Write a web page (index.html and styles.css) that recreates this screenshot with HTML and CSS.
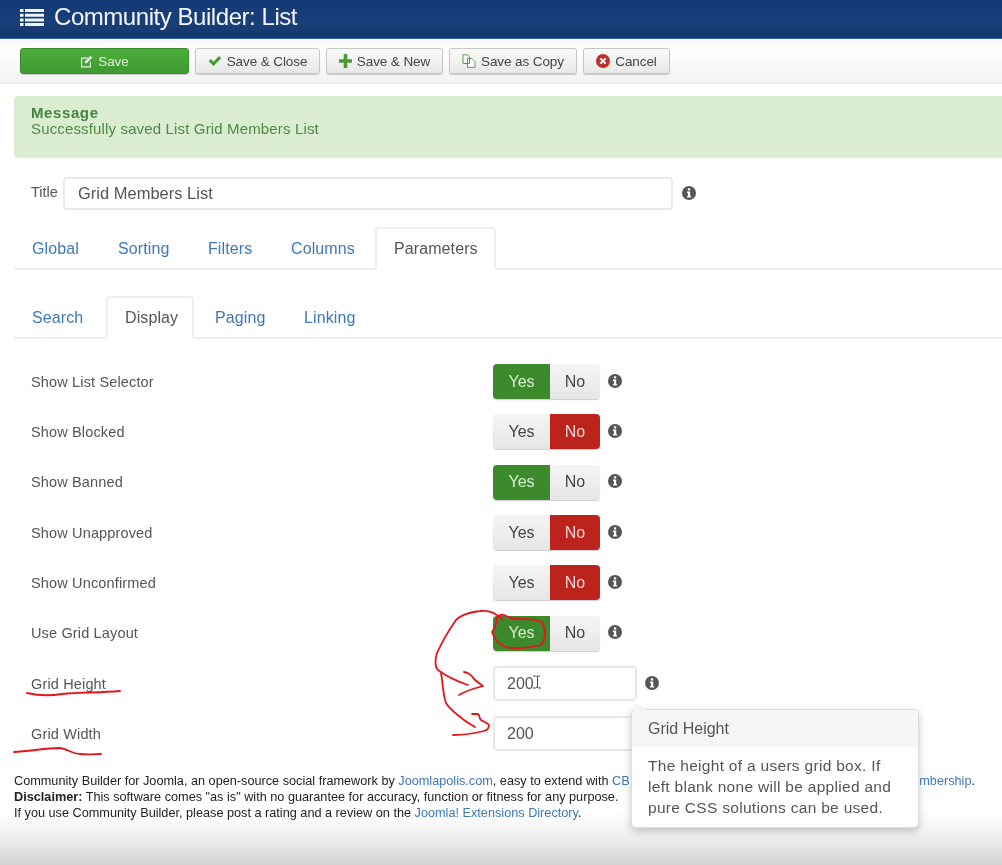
FILE: index.html
```html
<!DOCTYPE html>
<html lang="en">
<head>
<meta charset="utf-8">
<title>Community Builder: List</title>
<link rel="stylesheet" href="styles.css">
</head>
<body>
<svg width="0" height="0" class="defs" aria-hidden="true">
  <symbol id="info" viewBox="0 0 14 14">
    <circle cx="7" cy="7" r="7" fill="#555"/>
    <rect x="5.9" y="2.3" width="2.3" height="2.2" fill="#fff"/>
    <path d="M4.9 5.6h3.3v4.6h1v1.3H4.9v-1.3h1V6.9h-1z" fill="#fff"/>
  </symbol>
</svg>
<div class="page">
  <header class="topbar">
    <svg class="menu-icon" width="24" height="18" viewBox="0 0 24 18"><path d="M0 1h3.5v3H0zM5 1h19v3H5zM0 5.7h3.5v3H0zM5 5.7h19v3H5zM0 10.4h3.5v3H0zM5 10.4h19v3H5zM0 15h3.5v3H0zM5 15h19v3H5z" fill="#f2f4f8"/></svg>
    <h1>Community Builder: List</h1>
  </header>
  <nav class="toolbar">
    <button class="tb tb-save">
      <svg width="13" height="13" viewBox="0 0 13 13"><path d="M1 2.5h7L7 3.7H2.2v7.6h7.6V7.5L11 6.3v6.2H1z" fill="#e8f5e4"/><path d="M4.8 6.5l5.8-5.8 1.8 1.8-5.8 5.8H4.8z" fill="#e8f5e4"/></svg>
      Save
    </button>
    <button class="tb tb-close">
      <svg width="14" height="12" viewBox="0 0 14 12"><path d="M.7 6.3l2.2-2.2 2.6 2.6L11 1l2.2 2.2-7.7 7.9z" fill="#4a9a36"/></svg>
      Save &amp; Close
    </button>
    <button class="tb tb-new">
      <svg width="13" height="14" viewBox="0 0 13 14"><path d="M4.7 0h3.6v5.2H13v3.6H8.3V14H4.7V8.8H0V5.2h4.7z" fill="#4a9a36"/></svg>
      Save &amp; New
    </button>
    <button class="tb tb-copy">
      <svg width="14" height="14" viewBox="0 0 14 14"><path d="M1 .8h4.500L7.500 3v6.500H1zM5.500 4.500H10l3 3v5.800H5.500z" fill="#fff" stroke="#5a9a48" stroke-width="1"/></svg>
      Save as Copy
    </button>
    <button class="tb tb-cancel">
      <svg width="14" height="14" viewBox="0 0 14 14"><circle cx="7" cy="7" r="7" fill="#c0302a"/><path d="M4.4 4.4l5.2 5.2M9.6 4.4l-5.2 5.2" stroke="#fff" stroke-width="2"/></svg>
      Cancel
    </button>
  </nav>
  <section class="message">
    <h2>Message</h2>
    <p>Successfully saved List Grid Members List</p>
  </section>
  <div class="title-row">
    <label class="title-label">Title</label>
    <div class="input title-input">Grid Members List</div>
    <svg class="info" width="14" height="14"><use href="#info"/></svg>
  </div>
  <ul class="tabs tabs-main">
    <li><a>Global</a></li>
    <li><a>Sorting</a></li>
    <li><a>Filters</a></li>
    <li><a>Columns</a></li>
    <li class="active"><a>Parameters</a></li>
  </ul>
  <ul class="tabs tabs-sub">
    <li><a>Search</a></li>
    <li class="active"><a>Display</a></li>
    <li><a>Paging</a></li>
    <li><a>Linking</a></li>
  </ul>
  <div class="rows">
    <div class="row"><span class="row-label">Show List Selector</span><div class="toggle"><span class="yes on">Yes</span><span class="no">No</span></div><svg class="info" width="14" height="14"><use href="#info"/></svg></div>
    <div class="row"><span class="row-label">Show Blocked</span><div class="toggle"><span class="yes">Yes</span><span class="no on">No</span></div><svg class="info" width="14" height="14"><use href="#info"/></svg></div>
    <div class="row"><span class="row-label">Show Banned</span><div class="toggle"><span class="yes on">Yes</span><span class="no">No</span></div><svg class="info" width="14" height="14"><use href="#info"/></svg></div>
    <div class="row"><span class="row-label">Show Unapproved</span><div class="toggle"><span class="yes">Yes</span><span class="no on">No</span></div><svg class="info" width="14" height="14"><use href="#info"/></svg></div>
    <div class="row"><span class="row-label">Show Unconfirmed</span><div class="toggle"><span class="yes">Yes</span><span class="no on">No</span></div><svg class="info" width="14" height="14"><use href="#info"/></svg></div>
    <div class="row"><span class="row-label">Use Grid Layout</span><div class="toggle"><span class="yes on">Yes</span><span class="no">No</span></div><svg class="info" width="14" height="14"><use href="#info"/></svg></div>
    <div class="row"><span class="row-label">Grid Height</span><div class="input num-input">200</div><svg class="info" width="14" height="14"><use href="#info"/></svg></div>
    <div class="row"><span class="row-label">Grid Width</span><div class="input num-input">200</div></div>
  </div>
  <footer class="foot">
    <p class="foot-split"><span>Community Builder for Joomla, an open-source social framework by <a>Joomlapolis.com</a>, easy to extend with <a>CB</a></span><span><a>mbership</a>.</span></p>
    <p><b>Disclaimer:</b> This software comes "as is" with no guarantee for accuracy, function or fitness for any purpose.</p>
    <p>If you use Community Builder, please post a rating and a review on the <a>Joomla! Extensions Directory</a>.</p>
  </footer>

  <aside class="tip">
    <h3>Grid Height</h3>
    <p>The height of a users grid box. If left blank none will be applied and pure CSS solutions can be used.</p>
  </aside>

  <svg class="marks" width="1002" height="865" viewBox="0 0 1002 865" fill="none">
    <g stroke="#e8141c" stroke-width="1.8" stroke-linecap="round" stroke-linejoin="round">
      <path d="M497 617C503 613 505 615 510 618C520 620 535 618 542 622C546 630 546 640 541 645C530 648 512 650 503 646C497 642 494 638 492 632C495 628 497 622 497 617Z"/>
      <path d="M502 619C495 612 488 610 480 611C470 612 462 614 456 620C449 630 442 642 437 653C435 660 434 666 438 670C446 676 456 681 468 685"/>
      <path d="M464 672C470 673 472 676 474 679C477 682 480 684 483 686C475 688 466 691 459 695"/>
      <path d="M441 673C443 684 443 695 446 703C450 710 458 715 464 720C468 723 472 725 475 727"/>
      <path d="M472 714H478C480 716 479 718 481 720C484 722 488 723 489 725C489 728 488 730 484 731C476 733 464 735 453 735"/>
      <path d="M27 693C40 696 50 696 62 694C80 692 100 693 120 691"/>
      <path d="M14 752C30 751 48 748 60 748C68 749 72 754 80 754C88 755 95 754 101 754"/>
    </g>
    <path d="M533 676h2.500l1 1 1-1h2.500M537.500 677v10M533 688h2.500l1.500-1 1.500 1h2.500" stroke="#444" stroke-width="1"/>
  </svg>
</div>
</body>
</html>
```
FILE: styles.css
```css
* { box-sizing: border-box; }
html, body { margin: 0; padding: 0; background: #fff; }
.defs { position: absolute; }
.page {
  position: relative;
  width: 1002px;
  height: 865px;
  overflow: hidden;
  display: flex;
  flex-direction: column;
  background: linear-gradient(#ffffff 812px, #ececec 840px, #d2d2d2);
  color: #555;
  font-family: "Liberation Sans", Arial, sans-serif;
  filter: blur(0.5px);
}
.topbar {
  height: 39px;
  flex: none;
  display: flex;
  align-items: center;
  gap: 10px;
  padding: 0 0 5px 20px;
  background: linear-gradient(#123a76, #1a3f79 60%, #14366c);
  border-bottom: 1px solid #2f62a8;
}
.topbar h1 {
  margin: 0;
  font-size: 24px;
  font-weight: 400;
  letter-spacing: -0.45px;
  color: #f4f6fa;
}
.menu-icon { flex: none; }
.toolbar {
  height: 45px;
  flex: none;
  display: flex;
  gap: 6px;
  align-items: flex-start;
  padding: 9px 0 0 20px;
  background: linear-gradient(#f8f8f8, #ffffff 25%, #f2f2f2);
  border-bottom: 1px solid #eaeaea;
}
.tb {
  height: 26px;
  display: flex;
  align-items: center;
  justify-content: center;
  gap: 5px;
  padding: 0;
  border: 1px solid #c6c6c6;
  border-radius: 3px;
  background: linear-gradient(#fafafa, #e8e8e8);
  box-shadow: 0 1px 1px rgba(0, 0, 0, .18);
  color: #444;
  font-family: inherit;
  font-size: 13.500px;
  letter-spacing: -0.1px;
}
.tb-save { width: 169px; background: linear-gradient(#4cad3c, #3f9a31); border-color: #3a8a2e; color: #dff0da; }
.tb-close { width: 125px; }
.tb-new { width: 117px; }
.tb-copy { width: 128px; }
.tb-cancel { width: 87px; }
.message {
  flex: none;
  height: 62px;
  margin: 12px -10px 0 14px;
  padding: 8px 17px;
  background: #dbedd1;
  border-radius: 4px 0 0 4px;
  color: #4a8a44;
}
.message h2 { margin: 0; font-size: 15px; line-height: 17px; letter-spacing: .6px; font-weight: 700; color: #468441; }
.message p { margin: 0; font-size: 15px; line-height: 16px; letter-spacing: .15px; }
.title-row {
  flex: none;
  display: flex;
  align-items: center;
  margin-top: 19px;
  padding-left: 31px;
}
.title-label { width: 32px; font-size: 14.500px; margin-top: -3px; }
.input {
  display: flex;
  align-items: center;
  background: #fff;
  border: 2px solid #e8e8e8;
  border-radius: 4px;
  color: #555;
}
.title-input { width: 610px; height: 33px; padding-left: 13px; font-size: 16.500px; }
.title-row .info { margin-left: 9px; margin-top: -2px; }
.tabs {
  flex: none;
  display: flex;
  gap: 3px;
  list-style: none;
  margin: 0 0 0 14px;
  padding: 0;
  height: 43px;
  border-bottom: 2px solid #eeeeee;
  font-size: 16px;
  letter-spacing: .1px;
}
.tabs li { height: 43px; }
.tabs a { display: block; height: 43px; padding: 13px 18px 0; color: #3f78b5; }
.tabs .active a {
  background: #fff;
  border: 2px solid #eeeeee;
  border-bottom-color: #fff;
  border-radius: 4px 4px 0 0;
  padding: 11px 17px 0;
  color: #555;
}
.tabs-main { margin-top: 17px; }
.tabs-sub { margin-top: 26px; }
.tabs-main li:nth-child(1) { width: 83px; }
.tabs-main li:nth-child(2) { width: 87px; }
.tabs-main li:nth-child(3) { width: 80px; }
.tabs-main li:nth-child(4) { width: 99px; }
.tabs-main li:nth-child(5) { width: 121px; }
.tabs-sub li:nth-child(1) { width: 89px; }
.tabs-sub li:nth-child(2) { width: 88px; }
.tabs-sub li:nth-child(3) { width: 86px; }
.rows { flex: none; margin-top: 17.400px; padding-left: 31px; }
.row { height: 50.330px; display: flex; align-items: center; }
.row-label { width: 462px; font-size: 14.500px; letter-spacing: .15px; color: #555; }
.row .info { margin-left: 8px; margin-top: -2px; }
.toggle {
  width: 107px;
  height: 35px;
  display: flex;
  font-size: 16px;
  border-radius: 4px;
  box-shadow: 0 1px 1px rgba(0, 0, 0, .2);
  overflow: hidden;
}
.toggle span {
  display: flex;
  align-items: center;
  justify-content: center;
  background: linear-gradient(#f5f5f5, #e6e6e6);
  color: #444;
}
.toggle .yes { width: 57px; }
.toggle .no { width: 50px; }
.toggle .yes.on { background: #3d8a2d; color: #d8ecd2; }
.toggle .no.on { background: #bd231d; color: #f3d6d4; }
.num-input { width: 144px; height: 35px; padding-left: 12px; font-size: 16px; }
.foot {
  flex: none;
  margin-top: 13.600px;
  padding-left: 14px;
  font-size: 12.700px;
  line-height: 16px;
  color: #222;
  white-space: nowrap;
}
.foot p { margin: 0; }
.foot .foot-split { display: flex; justify-content: space-between; width: 961px; }
.foot a { color: #3f78b5; }
.tip {
  position: absolute;
  left: 631px;
  top: 709px;
  width: 288px;
  height: 119px;
  background: #fff;
  border: 1px solid #ddd;
  border-radius: 5px;
  box-shadow: 0 3px 8px rgba(0, 0, 0, .22);
}
.tip::before {
  content: "";
  position: absolute;
  left: 3px;
  top: -5px;
  width: 9px;
  height: 9px;
  background: #f4f4f4;
  transform: skewX(30deg) rotate(45deg);
}
.tip h3 {
  margin: 0;
  height: 37px;
  padding: 10px 16px 0;
  background: #f6f6f6;
  border-radius: 5px 5px 0 0;
  font-size: 16px;
  font-weight: 400;
  color: #555;
}
.tip p {
  margin: 0;
  padding: 8px 20px 0 16px;
  font-size: 15.500px;
  line-height: 21px;
  letter-spacing: .3px;
  color: #555;
}
.marks { position: absolute; left: 0; top: 0; pointer-events: none; }
```
